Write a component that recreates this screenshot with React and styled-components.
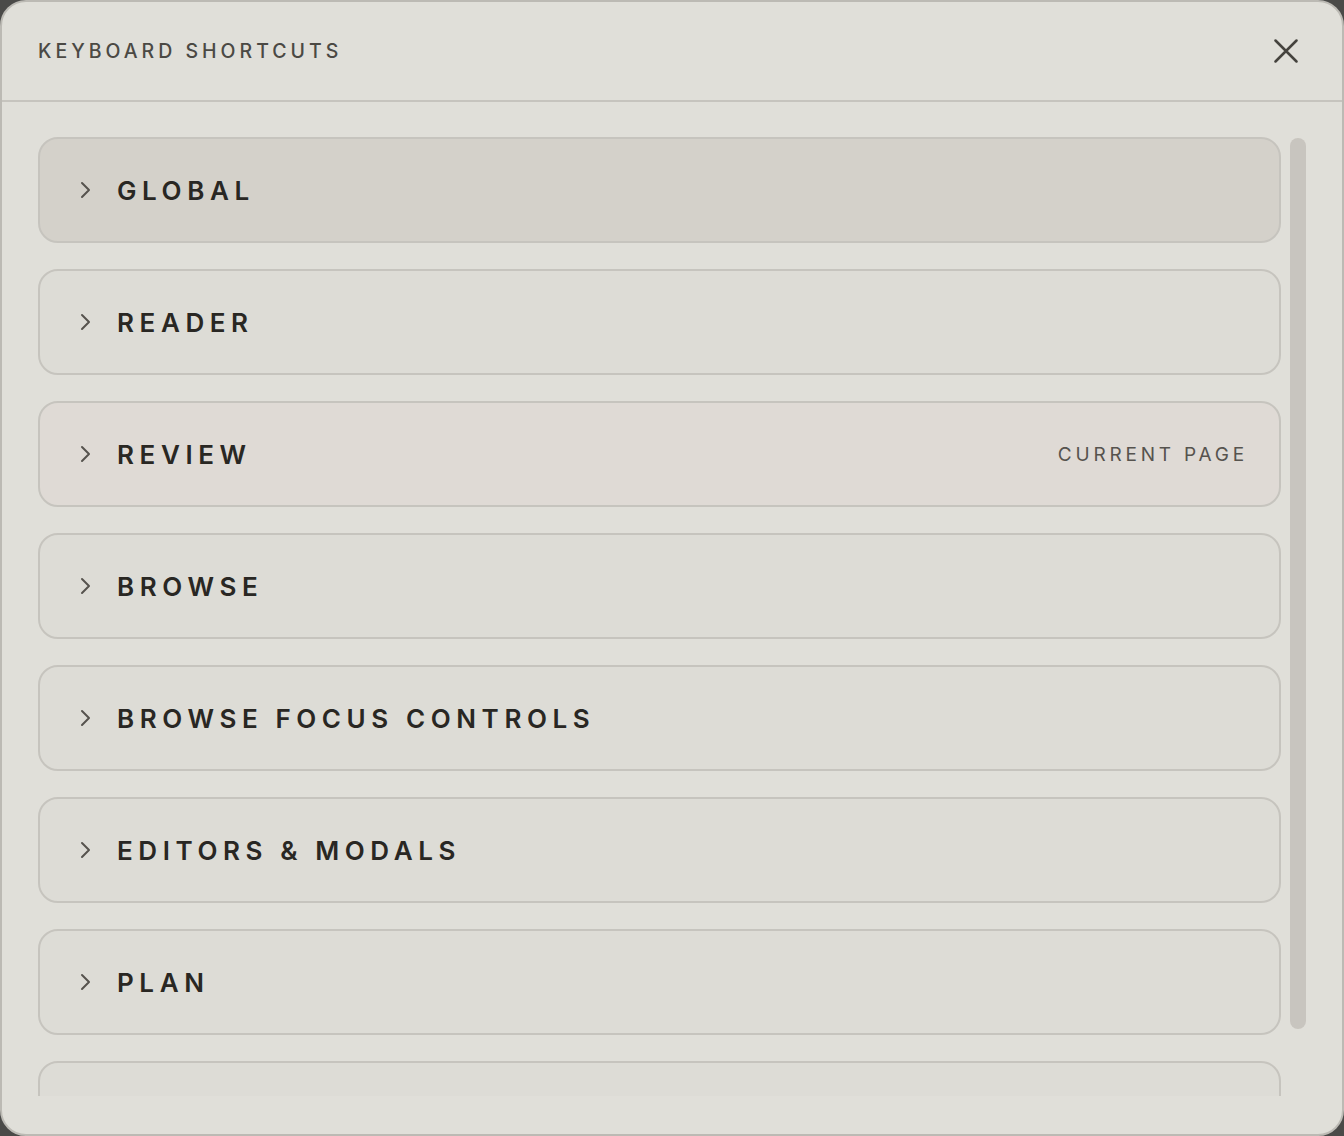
import React from "react";
import styled, { createGlobalStyle } from "styled-components";

const Global = createGlobalStyle`
  html, body { margin: 0; padding: 0; background: #4a4a48; }
  body { font-family: Inter, "Noto Sans", sans-serif; }
  #root { width: 1344px; height: 1136px; }
`;

const Modal = styled.div`
  box-sizing: border-box;
  width: 1344px;
  height: 1136px;
  background: #e0dfd9;
  border: 2px solid #bcbab4;
  border-radius: 26px;
  display: flex;
  flex-direction: column;
  overflow: hidden;
`;

const Header = styled.header`
  box-sizing: border-box;
  height: 100px;
  flex: none;
  display: flex;
  align-items: center;
  justify-content: space-between;
  padding: 0 40px 0 36px;
  border-bottom: 2px solid #c6c4be;
`;

const Title = styled.h2`
  margin: 0;
  font-family: Inter, sans-serif;
  font-weight: 500;
  font-size: 19.5px;
  letter-spacing: 0.205em;
  color: #4b4944;
`;

const CloseButton = styled.button`
  width: 32px;
  height: 32px;
  padding: 0;
  border: none;
  background: transparent;
  display: flex;
  align-items: center;
  justify-content: center;
  color: #45433e;
  cursor: pointer;
`;

const Body = styled.div`
  flex: 1;
  min-height: 0;
  padding: 35px 36px 38px 36px;
  display: flex;
  gap: 9px;
`;

const Scroller = styled.div`
  flex: 1;
  overflow-y: auto;
  scrollbar-width: none;
  display: flex;
  flex-direction: column;
  gap: 26px;
  &::-webkit-scrollbar { display: none; }
`;

const ScrollTrack = styled.div`
  flex: none;
  width: 16px;
  padding-top: 1px;
`;

const ScrollThumb = styled.div`
  height: 891px;
  border-radius: 8px;
  background: #c8c5bf;
`;

const Card = styled.div`
  box-sizing: border-box;
  flex: none;
  height: 106px;
  border: 2px solid #c6c4be;
  border-radius: 20px;
  background: ${(p) =>
    p.$variant === "hover" ? "#d4d1ca" : p.$variant === "current" ? "#dfdad5" : "#dddcd6"};
  display: flex;
  align-items: center;
  padding: 0 31px 0 40px;
`;

const Chevron = styled.span`
  display: flex;
  width: 14px;
  color: #56534e;
  margin-right: 23px;
`;

const Label = styled.span`
  flex: 1;
  font-family: Inter, sans-serif;
  font-weight: 600;
  font-size: 26px;
  letter-spacing: 0.215em;
  color: #292723;
`;

const Badge = styled.span`
  font-family: Inter, sans-serif;
  font-weight: 400;
  font-size: 19px;
  letter-spacing: 0.2em;
  color: #56534e;
`;

const sections = [
  { name: "GLOBAL", variant: "hover" },
  { name: "READER" },
  { name: "REVIEW", variant: "current", badge: "CURRENT PAGE" },
  { name: "BROWSE" },
  { name: "BROWSE FOCUS CONTROLS" },
  { name: "EDITORS & MODALS" },
  { name: "PLAN" },
  { name: "SETTINGS" },
];

export default function App() {
  return (
    <>
      <Global />
      <Modal>
        <Header>
          <Title>KEYBOARD SHORTCUTS</Title>
          <CloseButton aria-label="Close">
            <svg width="24" height="24" viewBox="0 0 24 24" fill="none" stroke="currentColor" strokeWidth="2.5" strokeLinecap="round">
              <path d="M1.5 1.5 L22.5 22.5 M22.5 1.5 L1.5 22.5" />
            </svg>
          </CloseButton>
        </Header>
        <Body>
          <Scroller>
            {sections.map((s) => (
              <Card key={s.name} $variant={s.variant}>
                <Chevron>
                  <svg width="14" height="18" viewBox="0 0 14 18" fill="none" stroke="currentColor" strokeWidth="2" strokeLinecap="round" strokeLinejoin="round">
                    <path d="M2 2 L9 9 L2 16" />
                  </svg>
                </Chevron>
                <Label>{s.name}</Label>
                {s.badge && <Badge>{s.badge}</Badge>}
              </Card>
            ))}
          </Scroller>
          <ScrollTrack>
            <ScrollThumb />
          </ScrollTrack>
        </Body>
      </Modal>
    </>
  );
}
